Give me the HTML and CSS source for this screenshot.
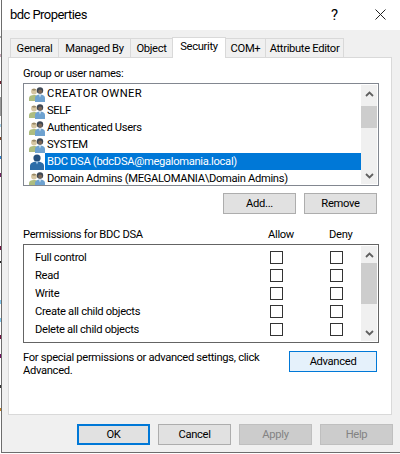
FILE: index.html
```html
<!DOCTYPE html>
<html lang="en">
<head>
<meta charset="utf-8">
<title>bdc Properties</title>
<link rel="stylesheet" href="styles.css">
</head>
<body>
<svg class="defs" width="0" height="0" aria-hidden="true">
  <symbol id="group" viewBox="0 0 16 16">
    <circle cx="5" cy="5.500" r="2.900" fill="#d6c6a2"/>
    <path d="M2.500 4a3 3 0 0 1 5 0L5 4.800z" fill="#9a8a68"/>
    <path d="M0 15v-3c0-2 2-3 5-3 1.500 0 2.500.3 3 1V15z" fill="#aebd80"/>
    <circle cx="11" cy="4.500" r="3.200" fill="#3d4754"/>
    <circle cx="11.200" cy="5.500" r="2" fill="#7a6656"/>
    <path d="M6 16v-4c0-2 2-3.500 5-3.500s5 1.500 5 3.500v4z" fill="#6ea2d0"/>
    <path d="M10 8.500h2l-1 3z" fill="#e4edf5"/>
  </symbol>
  <symbol id="user" viewBox="0 0 14 16">
    <circle cx="7" cy="4" r="3.600" fill="#24507d"/>
    <path d="M0 16v-4c0-3 3-4.500 7-4.500s7 1.500 7 4.500v4z" fill="#2c6da8"/>
    <path d="M5.500 7.500h3l-1.500 3z" fill="#9cc3e4"/>
  </symbol>
  <symbol id="up" viewBox="0 0 9 6"><path d="M1 5l3.500-3.500L8 5" fill="none" stroke="#606060" stroke-width="1.800"/></symbol>
  <symbol id="down" viewBox="0 0 9 6"><path d="M1 1l3.500 3.500L8 1" fill="none" stroke="#606060" stroke-width="1.800"/></symbol>
</svg>
<div class="desktop-edge"></div>
<div class="window">
  <header class="titlebar">
    <span class="title">bdc Properties</span>
    <span class="help">?</span>
    <svg class="close" width="11" height="11" viewBox="0 0 11 11"><path d="M.5.500l10 10M10.500.500l-10 10" stroke="#222" fill="none"/></svg>
  </header>
  <nav class="tabs">
    <span class="tab tab-general">General</span>
    <span class="tab tab-managed">Managed By</span>
    <span class="tab tab-object">Object</span>
    <span class="tab tab-active">Security</span>
    <span class="tab tab-com">COM+</span>
    <span class="tab tab-attr">Attribute Editor</span>
  </nav>
  <main class="panel">
    <div class="label">Group or user names:</div>
    <div class="listbox names">
      <ul class="rows">
        <li class="row"><svg class="icon"><use href="#group"/></svg><span class="name name-wide">CREATOR OWNER</span></li>
        <li class="row"><svg class="icon"><use href="#group"/></svg><span class="name">SELF</span></li>
        <li class="row"><svg class="icon"><use href="#group"/></svg><span class="name">Authenticated Users</span></li>
        <li class="row"><svg class="icon"><use href="#group"/></svg><span class="name">SYSTEM</span></li>
        <li class="row"><svg class="icon"><use href="#user"/></svg><span class="name selected">BDC DSA (bdcDSA@megalomania.local)</span></li>
        <li class="row"><svg class="icon"><use href="#group"/></svg><span class="name">Domain Admins (MEGALOMANIA\Domain Admins)</span></li>
      </ul>
      <div class="scrollbar">
        <div class="arrow"><svg width="9" height="6"><use href="#up"/></svg></div>
        <div class="track"><div class="thumb thumb-names"></div></div>
        <div class="arrow"><svg width="9" height="6"><use href="#down"/></svg></div>
      </div>
    </div>
    <div class="actions">
      <button class="btn">Add...</button>
      <button class="btn">Remove</button>
    </div>
    <div class="perm-head">
      <span class="perm-title">Permissions for BDC DSA</span>
      <span class="perm-allow">Allow</span>
      <span class="perm-deny">Deny</span>
    </div>
    <div class="listbox perms">
      <div class="perm-rows">
        <div class="perm-row"><span class="perm-name">Full control</span><i class="check"></i><i class="check"></i></div>
        <div class="perm-row"><span class="perm-name">Read</span><i class="check"></i><i class="check"></i></div>
        <div class="perm-row"><span class="perm-name">Write</span><i class="check"></i><i class="check"></i></div>
        <div class="perm-row"><span class="perm-name">Create all child objects</span><i class="check"></i><i class="check"></i></div>
        <div class="perm-row"><span class="perm-name">Delete all child objects</span><i class="check"></i><i class="check"></i></div>
        <div class="perm-row"><span class="perm-name"></span><i class="check"></i><i class="check"></i></div>
      </div>
      <div class="scrollbar">
        <div class="arrow"><svg width="9" height="6"><use href="#up"/></svg></div>
        <div class="track"><div class="thumb thumb-perms"></div></div>
        <div class="arrow"><svg width="9" height="6"><use href="#down"/></svg></div>
      </div>
    </div>
    <div class="advanced-row">
      <p class="note">For special permissions or advanced settings, click Advanced.</p>
      <button class="btn btn-hot">Advanced</button>
    </div>
  </main>
  <footer class="footer">
    <button class="btn btn-default">OK</button>
    <button class="btn">Cancel</button>
    <button class="btn btn-off">Apply</button>
    <button class="btn btn-off">Help</button>
  </footer>
</div>
</body>
</html>
```
FILE: styles.css
```css
* { box-sizing: border-box; }
html, body { margin: 0; padding: 0; }
body {
  width: 400px;
  height: 454px;
  overflow: hidden;
  display: flex;
  align-items: flex-start;
  background: #fff;
  font-family: Roboto, "Liberation Sans", sans-serif;
  font-size: 11.2px;
  letter-spacing: -0.32px;
  color: #000;
}
.defs { position: absolute; width: 0; height: 0; }
.desktop-edge {
  width: 1px;
  height: 454px;
  flex: none;
  background: linear-gradient(to bottom,
    #fff 0 36px, #aaa 36px 38px, #fff 38px 54px, #c8a8b8 54px 57px, #fff 57px 81px,
    #702030 81px 84px, #fff 84px 97px, #999 97px 116px, #fff 116px 124px, #a8d4ee 124px 127px,
    #fff 127px 137px, #804020 137px 140px, #fff 140px 156px, #2a80d0 156px 159px,
    #fff 159px 173px, #702060 173px 177px, #fff 177px 246px, #701040 246px 250px,
    #fff 250px 261px, #222 261px 263px, #fff 263px 300px, #80c8ee 300px 304px,
    #fff 304px 318px, #80c8ee 318px 322px, #fff 322px 335px, #701040 335px 339px,
    #fff 339px 354px, #701060 354px 358px, #fff 358px 385px, #333 385px 388px,
    #fff 388px 408px, #c08020 408px 411px, #fff 411px);
}
.window {
  width: 399px;
  height: 453px;
  flex: none;
  background: #f0f0f0;
  border-left: 1px solid #6d6d6d;
  border-bottom: 1px solid #6d6d6d;
  display: flex;
  flex-direction: column;
}
.titlebar {
  height: 30px;
  background: #fff;
  display: flex;
  align-items: center;
  padding: 0 0 1px 8px;
}
.title { font-size: 13px; letter-spacing: -0.55px; width: 321px; }
.help { font-size: 15px; width: 44px; }
.close { display: block; }
.tabs {
  display: flex;
  align-items: flex-end;
  height: 21px;
  margin-top: 7px;
  padding-left: 8px;
}
.tab {
  height: 19px;
  margin-bottom: 1px;
  margin-right: -1px;
  display: flex;
  align-items: center;
  justify-content: center;
  white-space: nowrap;
  background: #f0f0f0;
  border: 1px solid #d9d9d9;
  border-bottom: 0;
}
.tab-general { width: 49px; }
.tab-managed { width: 73px; }
.tab-object { width: 43px; }
.tab-active {
  width: 54px;
  height: 21px;
  margin-bottom: 0;
  padding-bottom: 3px;
  background: #fff;
  position: relative;
  z-index: 1;
}
.tab-com { width: 41px; }
.tab-attr { width: 79px; }
.panel {
  width: 384px;
  height: 358px;
  margin-top: -1px;
  margin-left: 6px;
  padding: 7px 12px 0 14px;
  background: #fff;
  border: 1px solid #d9d9d9;
}
.label { height: 18px; line-height: 17px; }
.listbox {
  display: flex;
  overflow: hidden;
  width: 356px;
  border: 1px solid #828790;
  padding: 1px;
  background: #fff;
}
.names { height: 103px; }
.perms { height: 99px; border-color: #646464; }
.rows { flex: 1; list-style: none; margin: 0; padding: 0; }
.row { display: flex; align-items: center; height: 17px; padding-left: 4px; }
.icon { width: 16px; height: 16px; flex: none; }
.name { flex: 1; height: 17px; line-height: 17px; padding-left: 2px; white-space: nowrap; }
.name-wide { letter-spacing: 0.4px; }
.selected { background: #0078d7; color: #fff; }
.scrollbar {
  width: 16px;
  flex: none;
  display: flex;
  flex-direction: column;
  background: #f0f0f0;
}
.arrow { height: 17px; flex: none; display: flex; align-items: center; justify-content: center; }
.arrow svg { display: block; }
.track { flex: 1; }
.thumb { background: #cdcdcd; }
.thumb-names { height: 22px; margin-top: 4px; }
.thumb-perms { height: 41px; }
.actions {
  display: flex;
  justify-content: flex-end;
  gap: 8px;
  margin-top: 7px;
  padding-right: 2px;
}
.btn {
  width: 73px;
  height: 21px;
  padding: 0;
  background: #e1e1e1;
  border: 1px solid #adadad;
  font: inherit;
  letter-spacing: inherit;
  color: #000;
}
.perm-head { display: flex; height: 18px; line-height: 18px; margin-top: 12px; }
.perm-title { width: 245px; flex: none; }
.perm-allow { width: 61px; flex: none; }
.perm-rows { flex: 1; padding-top: 2px; overflow: hidden; }
.perm-row { display: flex; align-items: center; height: 18px; padding-left: 10px; }
.perm-name { width: 235px; flex: none; }
.check {
  display: block;
  width: 13px;
  height: 13px;
  margin-right: 47px;
  border: 1px solid #333;
  background: #fff;
  flex: none;
}
.advanced-row {
  display: flex;
  justify-content: space-between;
  margin-top: 8px;
  padding-right: 2px;
}
.note { margin: 0; width: 245px; line-height: 13px; }
.btn-hot { width: 88px; background: #e5f1fb; border-color: #0078d7; }
.footer {
  display: flex;
  justify-content: flex-end;
  gap: 8px;
  margin-top: 9px;
  padding-right: 7px;
}
.btn-default { border: 2px solid #0078d7; }
.btn-off { background: #ccc; border-color: #bfbfbf; color: #838383; }
```
